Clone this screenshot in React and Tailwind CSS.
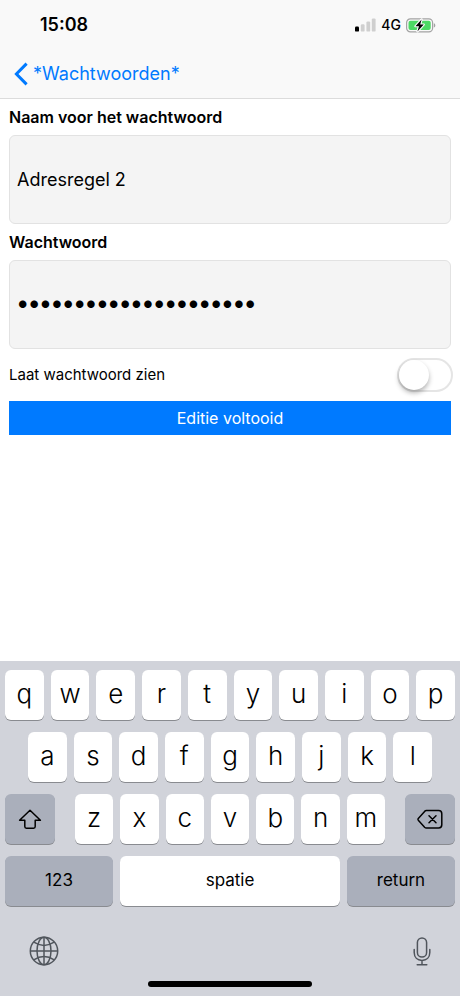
import { useState } from 'react';

const TOP_ROW = ['q', 'w', 'e', 'r', 't', 'y', 'u', 'i', 'o', 'p'];
const HOME_ROW = ['a', 's', 'd', 'f', 'g', 'h', 'j', 'k', 'l'];
const BOTTOM_ROW = ['z', 'x', 'c', 'v', 'b', 'n', 'm'];

function SignalIcon() {
  return (
    <svg width="21" height="14" viewBox="0 0 21 14" aria-hidden="true">
      <rect x="0" y="8.6" width="4" height="5" rx="1.2" fill="#000" />
      <rect x="5.8" y="6.2" width="3.8" height="7.4" rx="1.2" fill="#cfcfcf" />
      <rect x="11.4" y="3.4" width="3.8" height="10.2" rx="1.2" fill="#cfcfcf" />
      <rect x="16.8" y="0.4" width="3.8" height="13.2" rx="1.2" fill="#cfcfcf" />
    </svg>
  );
}

function BatteryIcon() {
  return (
    <svg width="30" height="15" viewBox="0 0 30 15" aria-hidden="true">
      <rect x="0.6" y="0.9" width="26" height="13" rx="3.8" fill="none" stroke="#a3a3a3" strokeWidth="1.2" />
      <rect x="2.5" y="2.8" width="22.2" height="9.2" rx="2" fill="#4cd964" />
      <path d="M27.8 5.2 C29.8 5.8 29.8 9 27.8 9.6 Z" fill="#a3a3a3" />
      <path d="M15.6 1.4 L9.4 8.2 H13 L11.4 13.4 L17.8 6.6 H14.2 Z" fill="#000" stroke="#fff" strokeWidth="2.2" strokeLinejoin="round" paintOrder="stroke" />
    </svg>
  );
}

function ShiftIcon() {
  return (
    <svg width="24" height="22" viewBox="0 0 24 22" fill="none" stroke="#000" strokeWidth="1.5" strokeLinejoin="round" aria-hidden="true">
      <path d="M12 2.2 L22.4 12.2 H17.2 V18.6 Q17.2 20.2 15.6 20.2 H8.4 Q6.8 20.2 6.8 18.6 V12.2 H1.6 Z" />
    </svg>
  );
}

function DeleteIcon() {
  return (
    <svg width="26" height="20" viewBox="0 0 26 20" fill="none" stroke="#000" strokeWidth="1.5" strokeLinecap="round" strokeLinejoin="round" aria-hidden="true">
      <path d="M9.4 1.6 H21.6 Q24.8 1.6 24.8 4.8 V15.8 Q24.8 19 21.6 19 H9.4 Q8.4 19 7.6 18.2 L1.3 11.2 Q0.7 10.3 1.3 9.4 L7.6 2.4 Q8.4 1.6 9.4 1.6 Z" />
      <path d="M12 6.8 L19 13.8 M19 6.8 L12 13.8" />
    </svg>
  );
}

function GlobeIcon() {
  return (
    <svg width="30" height="30" viewBox="0 0 30 30" fill="none" stroke="#50555c" strokeWidth="1.5" aria-hidden="true">
      <circle cx="15" cy="15" r="13.7" />
      <ellipse cx="15" cy="15" rx="7" ry="13.7" />
      <path d="M15 1.3 V28.7 M1.3 15 H28.7" />
      <path d="M4.8 6.2 Q15 12.6 25.2 6.2 M4.8 23.8 Q15 17.4 25.2 23.8" />
    </svg>
  );
}

function MicIcon() {
  return (
    <svg width="18" height="29" viewBox="0 0 18 29" fill="none" stroke="#50555c" strokeWidth="1.5" strokeLinecap="round" aria-hidden="true">
      <rect x="4.4" y="1" width="9.2" height="19" rx="4.6" />
      <path d="M1.2 12.6 V15.6 C1.2 20.4 4.4 23.4 9 23.4 C13.6 23.4 16.8 20.4 16.8 15.6 V12.6 M9 23.4 V27.6 M4.2 27.8 H13.8" />
    </svg>
  );
}

function Key({ children, onClick }) {
  return (
    <button
      type="button"
      onClick={onClick}
      className="h-[50px] min-w-0 flex-1 rounded-md bg-white pb-0.5 text-[26px] leading-8 font-[350] shadow-[0_1px_0_#898b90]"
    >
      {children}
    </button>
  );
}

function DarkKey({ children, label, className, onClick }) {
  return (
    <button
      type="button"
      aria-label={label}
      onClick={onClick}
      className={`flex h-[50px] items-center justify-center rounded-md bg-[#aaafbb] text-[17px] shadow-[0_1px_0_#898b90] ${className}`}
    >
      {children}
    </button>
  );
}

function Keyboard({ onType, onDelete }) {
  const renderKeys = (keys) =>
    keys.map((k) => (
      <Key key={k} onClick={() => onType(k)}>
        {k}
      </Key>
    ));

  return (
    <section className="mt-auto bg-[#d1d3da] px-[5px] py-[9px]">
      <div className="flex flex-col gap-3">
        <div className="flex gap-[7px]">{renderKeys(TOP_ROW)}</div>
        <div className="flex gap-[7px] px-[23px]">{renderKeys(HOME_ROW)}</div>
        <div className="flex gap-5">
          <DarkKey label="Shift" className="w-[50px]">
            <ShiftIcon />
          </DarkKey>
          <div className="flex flex-1 gap-[7px]">{renderKeys(BOTTOM_ROW)}</div>
          <DarkKey label="Wis" className="w-[50px]" onClick={onDelete}>
            <DeleteIcon />
          </DarkKey>
        </div>
        <div className="flex gap-[7px]">
          <DarkKey className="w-[108px]">123</DarkKey>
          <button
            type="button"
            onClick={() => onType(' ')}
            className="h-[50px] flex-1 rounded-md bg-white text-[17px] shadow-[0_1px_0_#898b90]"
          >
            spatie
          </button>
          <DarkKey className="w-[108px]">return</DarkKey>
        </div>
      </div>

      <div className="mt-[30px] flex items-center justify-between px-6">
        <button type="button" aria-label="Volgend toetsenbord">
          <GlobeIcon />
        </button>
        <button type="button" aria-label="Dicteren">
          <MicIcon />
        </button>
      </div>
      <div className="mx-auto mt-[15px] h-1.5 w-[164px] rounded-full bg-black" />
    </section>
  );
}

export default function App() {
  const [name, setName] = useState('Adresregel 2');
  const [password, setPassword] = useState('wachtwoordwachtwoord1');
  const [visible, setVisible] = useState(false);

  return (
    <div className="flex min-h-screen flex-col bg-white font-['Inter',sans-serif] text-black">
      <header className="border-b border-[#dcdcdc] bg-[#f9f9f9]">
        <div className="flex h-[50px] items-center justify-between pr-6 pl-10">
          <span className="text-lg font-semibold">15:08</span>
          <div className="flex items-center gap-[5px]">
            <SignalIcon />
            <span className="text-sm font-medium">4G</span>
            <BatteryIcon />
          </div>
        </div>
        <nav className="flex h-12 items-center px-3.5">
          <a href="#wachtwoorden" className="flex items-center gap-[5px] text-lg text-[#007aff]">
            <svg width="14" height="24" viewBox="0 0 14 24" fill="none" stroke="currentColor" strokeWidth="3" aria-hidden="true">
              <path d="M12.6 1.6 L2.4 12 L12.6 22.4" />
            </svg>
            *Wachtwoorden*
          </a>
        </nav>
      </header>

      <main className="flex flex-col px-[9px]">
        <label htmlFor="name" className="flex h-9 items-center text-base font-semibold">
          Naam voor het wachtwoord
        </label>
        <input
          id="name"
          type="text"
          value={name}
          onChange={(e) => setName(e.target.value)}
          className="h-[89px] w-full rounded-md border border-[#e2e2e2] bg-[#f4f4f4] px-[7px] text-lg outline-none"
        />

        <label htmlFor="password" className="flex h-9 items-center text-base font-semibold">
          Wachtwoord
        </label>
        <input
          id="password"
          type={visible ? 'text' : 'password'}
          value={password}
          onChange={(e) => setPassword(e.target.value)}
          className={`h-[89px] w-full rounded-md border border-[#e2e2e2] bg-[#f4f4f4] px-[7px] outline-none ${
            visible ? 'text-lg' : 'pb-1 text-2xl font-bold'
          }`}
        />

        <div className="flex h-[52px] items-center justify-between">
          <label htmlFor="visible" className="text-[15px]">
            Laat wachtwoord zien
          </label>
          <input
            id="visible"
            type="checkbox"
            role="switch"
            checked={visible}
            onChange={(e) => setVisible(e.target.checked)}
            className="-mr-0.5 flex h-[34px] w-14 appearance-none items-center rounded-full border-2 border-[#e5e5e5] bg-white before:size-[30px] before:rounded-full before:bg-white before:shadow-[0_3px_5px_rgba(0,0,0,0.3)] checked:justify-end checked:border-[#4cd964] checked:bg-[#4cd964]"
          />
        </div>

        <button type="button" className="h-[34px] w-full bg-[#007aff] text-base text-white">
          Editie voltooid
        </button>
      </main>

      <Keyboard
        onType={(k) => setName(name + k)}
        onDelete={() => setName(name.slice(0, -1))}
      />
    </div>
  );
}
